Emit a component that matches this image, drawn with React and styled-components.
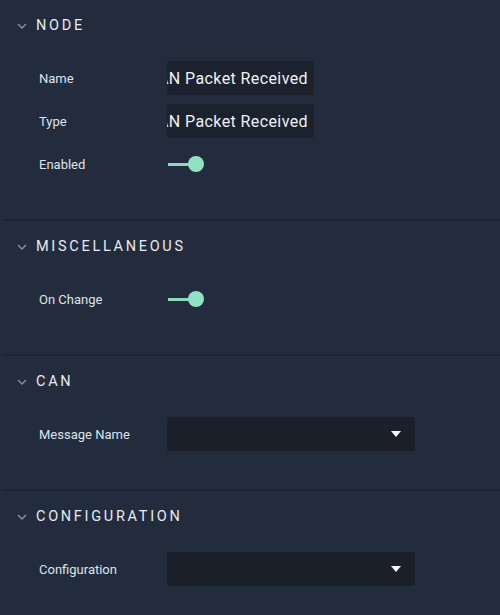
import React from 'react';
import styled, { createGlobalStyle } from 'styled-components';

const GlobalStyle = createGlobalStyle`
  html, body {
    margin: 0;
    padding: 0;
    background: #222c3c;
  }
  body {
    font-family: Roboto, "Noto Sans", "Liberation Sans", sans-serif;
  }
`;

const sections = [
  {
    title: 'NODE',
    rows: [
      { label: 'Name', kind: 'text', value: 'CAN Packet Received' },
      { label: 'Type', kind: 'text', value: 'CAN Packet Received' },
      { label: 'Enabled', kind: 'toggle' },
    ],
  },
  {
    title: 'MISCELLANEOUS',
    rows: [{ label: 'On Change', kind: 'toggle' }],
  },
  {
    title: 'CAN',
    rows: [{ label: 'Message Name', kind: 'select' }],
  },
  {
    title: 'CONFIGURATION',
    rows: [{ label: 'Configuration', kind: 'select' }],
  },
];

function Chevron() {
  return (
    <svg width="10" height="6" viewBox="0 0 10 6">
      <path d="M1 1l4 4 4-4" fill="none" stroke="#8a94a3" strokeWidth="1.3" />
    </svg>
  );
}

function Field({ row }) {
  if (row.kind === 'text') {
    return (
      <TextBox>
        <span>{row.value}</span>
      </TextBox>
    );
  }
  if (row.kind === 'toggle') {
    return (
      <Toggle>
        <Track />
        <Knob />
      </Toggle>
    );
  }
  return (
    <SelectBox>
      <Arrow />
    </SelectBox>
  );
}

export default function App() {
  return (
    <>
      <GlobalStyle />
      <Panel>
        {sections.map((s) => (
          <Section key={s.title}>
            <Header>
              <Chevron />
              <Title>{s.title}</Title>
            </Header>
            <Rows>
              {s.rows.map((r) => (
                <Row key={r.label}>
                  <Label>{r.label}</Label>
                  <Field row={r} />
                </Row>
              ))}
            </Rows>
          </Section>
        ))}
      </Panel>
    </>
  );
}

const Panel = styled.div`
  width: 500px;
  height: 615px;
  overflow: hidden;
  background: #222c3c;
`;

const Section = styled.section`
  margin-left: 2px;
  padding-bottom: 38px;
  border-bottom: 2px solid #1b2431;
  &:last-child {
    border-bottom: none;
  }
`;

const Header = styled.div`
  height: 51px;
  display: flex;
  align-items: center;
  gap: 9px;
  padding-left: 15px;
`;

const Title = styled.h2`
  margin: 0;
  font-size: 14.5px;
  font-weight: 400;
  letter-spacing: 2.7px;
  color: #e6ebf1;
`;

const Rows = styled.div`
  display: flex;
  flex-direction: column;
  gap: 9px;
  padding-top: 10px;
`;

const Row = styled.div`
  display: flex;
  align-items: center;
  height: 34px;
`;

const Label = styled.div`
  width: 128px;
  padding-left: 37px;
  font-size: 13px;
  color: #dde3ea;
`;

const TextBox = styled.div`
  width: 147px;
  height: 34px;
  box-sizing: border-box;
  padding-right: 6px;
  display: flex;
  align-items: center;
  justify-content: flex-end;
  overflow: hidden;
  white-space: nowrap;
  background: #1c222d;
  border-radius: 2px;
  font-size: 16px;
  letter-spacing: 0.4px;
  color: #eef1f5;
`;

const Toggle = styled.div`
  position: relative;
  width: 38px;
  height: 16px;
  display: flex;
  align-items: center;
`;

const Track = styled.div`
  width: 24px;
  height: 3px;
  margin-left: 1px;
  background: #86dcbc;
`;

const Knob = styled.div`
  position: absolute;
  left: 21px;
  top: 0;
  width: 16px;
  height: 16px;
  border-radius: 50%;
  background: #8fe3c4;
`;

const SelectBox = styled.div`
  width: 248px;
  height: 34px;
  box-sizing: border-box;
  display: flex;
  align-items: center;
  justify-content: flex-end;
  padding-right: 14px;
  background: #1b1f29;
  border-radius: 2px;
`;

const Arrow = styled.div`
  width: 0;
  height: 0;
  border-left: 5px solid transparent;
  border-right: 5px solid transparent;
  border-top: 6px solid #f4f6fa;
`;
